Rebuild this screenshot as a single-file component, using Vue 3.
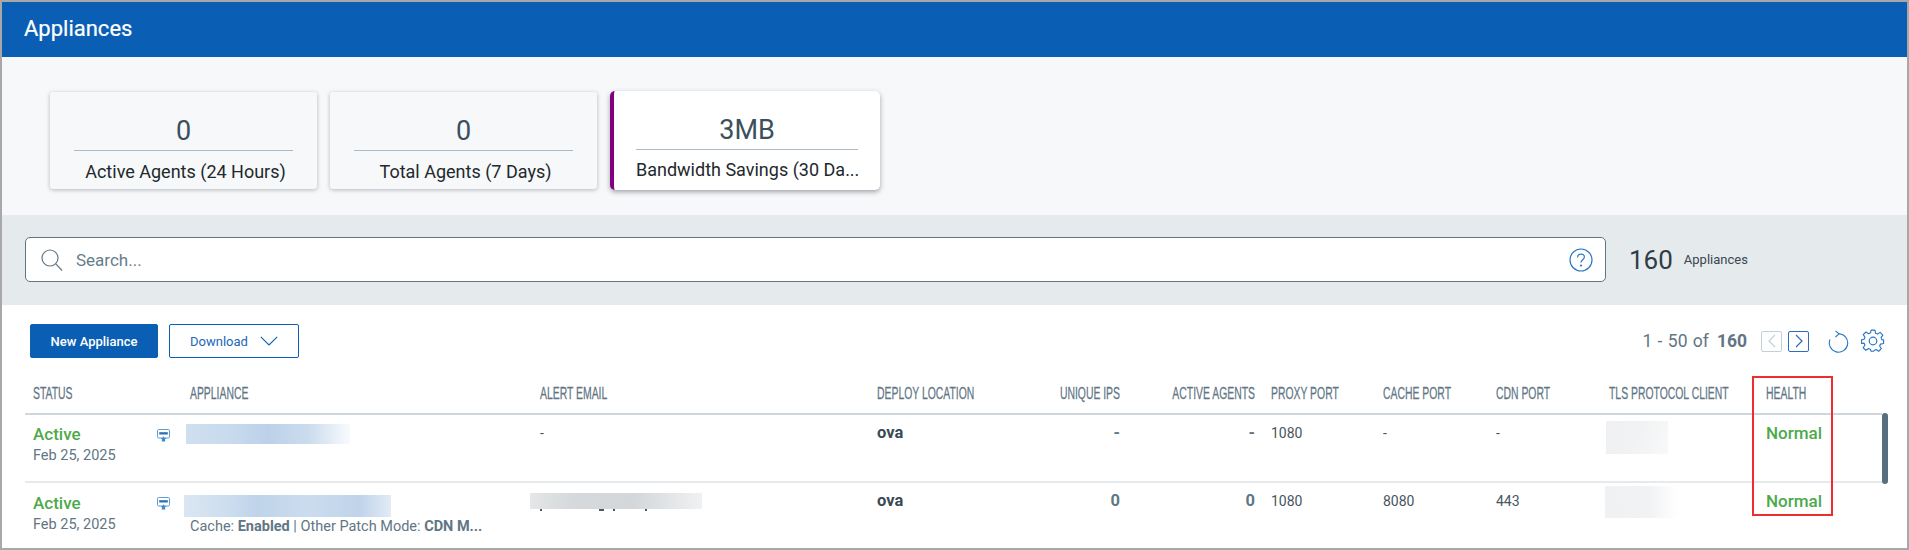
<script setup>
const cards = [
  { value: '0', label: 'Active Agents (24 Hours)', active: false },
  { value: '0', label: 'Total Agents (7 Days)', active: false },
  { value: '3MB', label: 'Bandwidth Savings (30 Da...', active: true },
]
const columns = [
  { label: 'STATUS' },
  { label: 'APPLIANCE' },
  { label: 'ALERT EMAIL' },
  { label: 'DEPLOY LOCATION' },
  { label: 'UNIQUE IPS', right: true },
  { label: 'ACTIVE AGENTS', right: true },
  { label: 'PROXY PORT' },
  { label: 'CACHE PORT' },
  { label: 'CDN PORT' },
  { label: 'TLS PROTOCOL CLIENT' },
  { label: 'HEALTH' },
]
const rows = [
  { first: true, email: '-', unique: '-', agents: '-', proxy: '1080', cache: '-', cdn: '-' },
  { first: false, email: '', unique: '0', agents: '0', proxy: '1080', cache: '8080', cdn: '443' },
]
</script>

<template>
  <div class="page">
    <header class="title-bar">Appliances</header>

    <section class="stats">
      <div v-for="c in cards" :key="c.label" class="card" :class="{ active: c.active }">
        <div class="card-value">{{ c.value }}</div>
        <div class="card-label">{{ c.label }}</div>
      </div>
    </section>

    <section class="band">
      <div class="search">
        <svg class="search-icon" width="24" height="24" viewBox="0 0 24 24" fill="none" stroke="#5f7685" stroke-width="1.2">
          <circle cx="10" cy="10" r="8" />
          <path d="M15.8 15.8 22 22.5" />
        </svg>
        <span class="search-text">Search...</span>
        <svg class="help-icon" width="24" height="24" viewBox="0 0 24 24" fill="none" stroke="#2a77c4" stroke-width="1.2">
          <circle cx="12" cy="12" r="11" />
          <path d="M8.6 9.4c0-2 1.5-3.3 3.4-3.3s3.4 1.2 3.4 3c0 2.600-3.4 2.600-3.4 5.400" />
          <circle cx="12" cy="17.6" r=".5" fill="#2a77c4" />
        </svg>
      </div>
      <div class="summary"><span class="summary-num">160</span><span class="summary-text">Appliances</span></div>
    </section>

    <section class="content">
      <div class="toolbar">
        <button class="btn primary">New Appliance</button>
        <button class="btn outline">
          <span>Download</span>
          <svg width="18" height="10" viewBox="0 0 18 10" fill="none" stroke="#0a5fb4" stroke-width="1.1"><path d="M.8.8 9 9l8.2-8.2" /></svg>
        </button>
        <div class="pager">
          <span class="pager-text">1 - 50 of</span>
          <b class="pager-total">160</b>
          <span class="page-btn off">
            <svg width="10" height="14" viewBox="0 0 10 14" fill="none" stroke="#c4d0d8" stroke-width="1.2"><path d="M8 1 2 7l6 6" /></svg>
          </span>
          <span class="page-btn on">
            <svg width="10" height="14" viewBox="0 0 10 14" fill="none" stroke="#2a6fb8" stroke-width="1.2"><path d="m2 1 6 6-6 6" /></svg>
          </span>
          <svg class="refresh" width="21" height="23" viewBox="0 0 21 23" fill="none" stroke="#2a77c4" stroke-width="1.1">
            <path d="M10.5 3.800A9.200 9.200 0 1 1 2 9.500" />
            <path d="M7.500.8 11 3.800 7.500 7" />
          </svg>
          <svg class="gear" width="24" height="24" viewBox="0 0 24 24" fill="none" stroke="#2a77c4" stroke-width="1.2" stroke-linejoin="round">
            <circle cx="12" cy="12" r="3.800" />
            <path d="M10 1h4l.6 3.200 2 .9 2.800-1.800 2.800 2.800-1.800 2.700.9 2.100L23 11.100v3.800l-3.200.6-.9 2 1.800 2.800-2.800 2.700-2.700-1.800-2.100.9L12.600 23H10l-.6-1.900-2.100-.9-2.700 1.800-2.800-2.700 1.800-2.800-.9-2L0 14.900v-3.800l2.700-.6.9-2.100-1.800-2.700 2.800-2.800L7.400 4.700l2-.9z" transform="translate(.5 .2) scale(.96)" />
          </svg>
        </div>
      </div>

      <div class="table">
        <div class="grid head">
          <div v-for="col in columns" :key="col.label" class="th" :class="{ right: col.right }">
            <span class="th-text">{{ col.label }}</span>
          </div>
        </div>

        <div v-for="(r, i) in rows" :key="i" class="grid row">
          <div class="cell status">
            <div class="status-main">
              <div class="active-text">Active</div>
              <div class="date">Feb 25, 2025</div>
            </div>
            <svg class="device" width="13" height="13" viewBox="0 0 13 13">
              <rect x=".5" y=".5" width="12" height="8.500" rx="1.200" fill="#fff" stroke="#5b9bd8" />
              <rect x="2.200" y="3.200" width="8.600" height="2.300" fill="#2f6fae" />
              <path d="m6.500 7.300 1 1.700 1.800.3-1.300 1.300.3 2H4.700l.3-2-1.300-1.300 1.800-.3z" fill="#3f8ad2" />
            </svg>
          </div>

          <div class="cell appliance">
            <div v-if="r.first" class="blur name-one"></div>
            <template v-else>
              <div class="blur name-two"></div>
              <div class="meta">Cache: <b>Enabled</b> | Other Patch Mode: <b>CDN M...</b></div>
            </template>
          </div>

          <div class="cell email">
            <template v-if="r.first">{{ r.email }}</template>
            <template v-else>
              <div class="blur email-blur"></div>
              <div class="ticks"><i></i><i class="t2"></i><i class="t3"></i><i class="t4"></i></div>
            </template>
          </div>

          <div class="cell ova">ova</div>
          <div class="cell num">{{ r.unique }}</div>
          <div class="cell num">{{ r.agents }}</div>
          <div class="cell">{{ r.proxy }}</div>
          <div class="cell">{{ r.cache }}</div>
          <div class="cell">{{ r.cdn }}</div>
          <div class="cell tls">
            <div class="blur" :class="r.first ? 'tls-one' : 'tls-two'"></div>
          </div>
          <div class="cell health">Normal</div>
        </div>

        <div class="scrollbar"></div>
      </div>

      <div class="highlight"></div>
    </section>
  </div>
</template>

<style scoped>
.page {
  box-sizing: border-box;
  width: 1909px;
  height: 550px;
  border: 2px solid #a8a8a8;
  overflow: hidden;
  display: flex;
  flex-direction: column;
  font-family: Roboto, "Liberation Sans", sans-serif;
  background: #fff;
  color: #3a4a54;
}
.title-bar {
  height: 55px;
  flex: none;
  background: #0a5fb4;
  color: #fff;
  font-size: 22px;
  line-height: 53px;
  padding-left: 22px;
  -webkit-text-stroke: .2px #fff;
}
.stats {
  height: 158px;
  flex: none;
  box-sizing: border-box;
  background: #f7f8fa;
  display: flex;
  align-items: flex-start;
  padding: 35px 0 0 48px;
  gap: 13px;
}
.card {
  box-sizing: border-box;
  width: 267px;
  height: 97px;
  background: #f6f8fa;
  border-radius: 3px;
  box-shadow: 0 1px 4px rgba(50, 60, 70, .35);
  padding: 0 24px;
  text-align: center;
}
.card.active {
  width: 270px;
  height: 99px;
  margin-top: -1px;
  background: #fff;
  border-left: 4px solid #800080;
  border-radius: 5px;
  padding: 0 22px;
  box-shadow: 0 2px 5px rgba(50, 60, 70, .45);
}
.card-value {
  height: 59px;
  box-sizing: border-box;
  padding-top: 22px;
  font-size: 27px;
  line-height: 34px;
  color: #3c4f5c;
  border-bottom: 1px solid #aabac6;
}
.card-label {
  font-size: 18px;
  line-height: 20px;
  padding: 11px 0 0 4px;
  color: #22282c;
  white-space: nowrap;
}
.card.active .card-label { padding: 10px 0 0; }
.band {
  height: 90px;
  flex: none;
  box-sizing: border-box;
  background: #e5eaed;
  padding: 22px 0 0 23px;
  display: flex;
  align-items: flex-start;
}
.search {
  box-sizing: border-box;
  width: 1581px;
  height: 45px;
  background: #fff;
  border: 1px solid #5f7685;
  border-radius: 5px;
  display: flex;
  align-items: center;
  padding: 0 12px 0 14px;
}
.search-icon { flex: none; }
.search-text {
  margin-left: 12px;
  font-size: 17px;
  color: #667d8c;
  flex: 1;
}
.help-icon { flex: none; }
.summary {
  margin-left: 23px;
  height: 45px;
  display: flex;
  align-items: center;
}
.summary-num {
  font-size: 26px;
  color: #2f3c46;
}
.summary-text {
  font-size: 13px;
  color: #3a4650;
  margin-left: 11px;
}
.content {
  flex: 1;
  position: relative;
  min-height: 0;
}
.toolbar {
  height: 71px;
  box-sizing: border-box;
  padding: 19px 0 0 28px;
  display: flex;
  align-items: flex-start;
}
.btn {
  box-sizing: border-box;
  height: 34px;
  border-radius: 2px;
  font-family: inherit;
  font-size: 13px;
  padding: 0;
  cursor: pointer;
}
.primary {
  width: 128px;
  background: #0a5fb4;
  color: #fff;
  border: 1px solid #0a5fb4;
  font-weight: 500;
}
.outline {
  width: 130px;
  margin-left: 11px;
  background: #fff;
  color: #2068b6;
  border: 1px solid #0a5fb4;
  display: flex;
  align-items: center;
  justify-content: center;
  gap: 12px;
}
.pager {
  margin-left: auto;
  margin-right: 22px;
  height: 34px;
  display: flex;
  align-items: center;
}
.pager-text {
  font-size: 17.500px;
  color: #5f7685;
  word-spacing: 1px;
}
.pager-total {
  font-size: 17.500px;
  margin-left: 8px;
  color: #5f7685;
  font-weight: 700;
}
.page-btn {
  box-sizing: border-box;
  width: 21px;
  height: 21px;
  border-radius: 2px;
  display: flex;
  align-items: center;
  justify-content: center;
}
.off { border: 1px solid #c4d0d8; margin-left: 14px; }
.on { border: 1px solid #2a6fb8; margin-left: 6px; }
.refresh { margin-left: 19px; }
.gear { margin-left: 12px; }
.table {
  position: relative;
  margin-left: 23px;
  width: 1857px;
}
.grid {
  display: grid;
  grid-template-columns: 157px 350px 337px 134px 125px 135px 112px 113px 113px 157px 124px;
}
.head {
  height: 37px;
  border-bottom: 2px solid #cfd6dc;
  align-items: center;
}
.th {
  padding: 0 8px;
  white-space: nowrap;
  display: flex;
  transform: translateY(-1px);
}
.th.right { justify-content: flex-end; }
.th-text {
  display: inline-block;
  font-family: "Liberation Sans Narrow", "Liberation Sans", sans-serif;
  font-size: 16px;
  color: #5f7685;
  -webkit-text-stroke: .25px #5f7685;
  transform: scaleX(.65) scaleY(1.08);
  transform-origin: left center;
  width: 0;
}
.th.right .th-text {
  transform-origin: right center;
  direction: rtl;
}
.row {
  height: 66px;
  border-bottom: 2px solid #e7e9eb;
  font-size: 14px;
  color: #465660;
}
.row:last-of-type { border-bottom: 0; }
.cell {
  padding: 8px 8px 0;
  line-height: 20px;
  min-width: 0;
}
.status {
  display: flex;
  justify-content: space-between;
  padding-top: 9px;
  padding-right: 12px;
}
.active-text {
  font-size: 17px;
  font-weight: 500;
  line-height: 20px;
  color: #4caa4a;
}
.row + .row .active-text { margin-top: 1px; }
.row + .row .date { margin-top: 2px; }
.date {
  font-size: 14.500px;
  line-height: 20px;
  margin-top: 2px;
  color: #5f7685;
}
.device { margin-top: 5px; flex: none; }
.blur { flex: none; }
.appliance { padding-top: 9px; }
.name-one {
  width: 164px;
  height: 20px;
  margin-left: -4px;
  background: linear-gradient(90deg, #cfdfef 0%, #c9dbee 25%, #bcd1e9 50%, #cbdcee 75%, #f8fbfd 100%);
}
.name-two {
  width: 207px;
  height: 22px;
  margin-left: -6px;
  margin-top: 3px;
  background: linear-gradient(90deg, #dbe6f2 0%, #cddeef 20%, #bfd4ea 35%, #cbdcee 60%, #bfd4ea 85%, #e2ebf5 100%);
}
.meta {
  font-size: 14.500px;
  line-height: 20px;
  color: #5f7685;
  white-space: nowrap;
}
.meta b { font-weight: 700; }
.email { padding-top: 8px; }
.email-blur {
  width: 172px;
  height: 16px;
  margin-left: -10px;
  margin-top: 2px;
  background: linear-gradient(90deg, #e4e6e7 0%, #d5d9db 25%, #d3d7da 60%, #f0f1f2 100%);
}
.ticks {
  height: 2px;
  display: flex;
  gap: 57px;
}
.ticks i { width: 2px; height: 2px; background: #4a5a64; display: block; }
.ticks .t2 { width: 5px; }
.ticks .t3 { margin-left: -48px; }
.ticks .t4 { margin-left: -27px; }
.ova {
  font-size: 16.500px;
  font-weight: 700;
  color: #3a4a54;
}
.num {
  text-align: right;
  font-weight: 700;
  font-size: 16.500px;
  color: #5f7685;
}
.tls { padding: 6px 0 0 5px; }
.row + .row .tls { padding: 3px 0 0 4px; }
.tls-one {
  width: 62px;
  height: 33px;
  background: linear-gradient(110deg, #eff0f1 0%, #f1f2f3 50%, #f9f9fa 100%);
}
.tls-two {
  width: 73px;
  height: 32px;
  background: linear-gradient(90deg, #eff1f2 0%, #f1f2f3 60%, #fff 100%);
}
.health {
  font-size: 17px;
  font-weight: 500;
  color: #4caa4a;
  padding-top: 8px;
}
.scrollbar {
  position: absolute;
  right: -6px;
  top: 37px;
  width: 6px;
  height: 71px;
  border-radius: 3px;
  background: #566e7d;
}
.highlight {
  position: absolute;
  left: 1750px;
  top: 71px;
  width: 81px;
  height: 140px;
  box-sizing: border-box;
  border: 2px solid #ee2e2e;
  pointer-events: none;
}
</style>
